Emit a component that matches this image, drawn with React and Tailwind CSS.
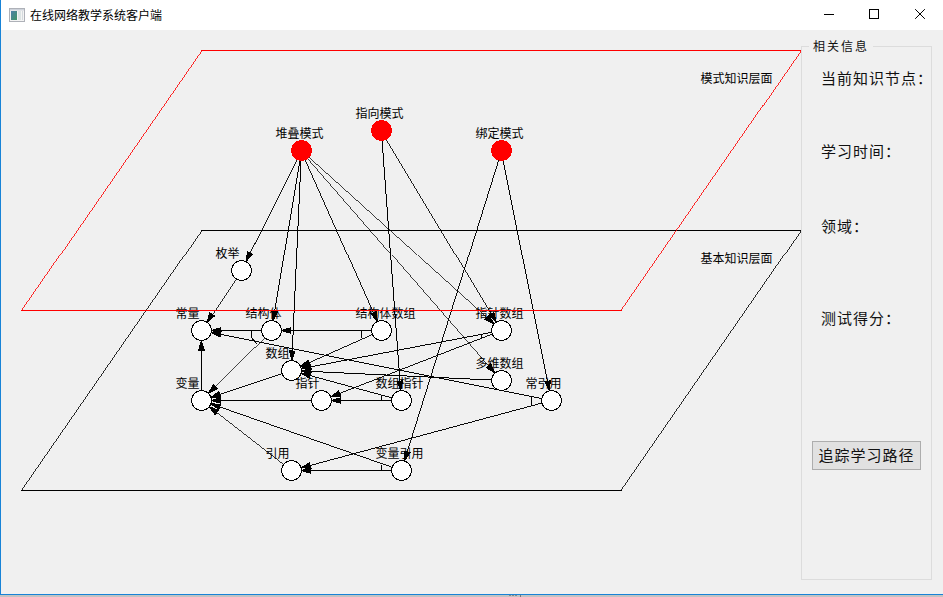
const NODES = {
  stack: { x: 301, y: 150, label: '堆叠模式', pattern: true },
  point: { x: 381, y: 130, label: '指向模式', pattern: true },
  bind: { x: 501, y: 150, label: '绑定模式', pattern: true },
  enumeration: { x: 241, y: 270, label: '枚举' },
  constant: { x: 201, y: 330, label: '常量' },
  struct: { x: 271, y: 330, label: '结构体' },
  structArray: { x: 381, y: 330, label: '结构体数组' },
  pointerArray: { x: 501, y: 330, label: '指针数组' },
  array: { x: 291, y: 370, label: '数组' },
  multiArray: { x: 501, y: 380, label: '多维数组' },
  variable: { x: 201, y: 400, label: '变量' },
  pointer: { x: 321, y: 400, label: '指针' },
  arrayPointer: { x: 401, y: 400, label: '数组指针' },
  constRef: { x: 551, y: 400, label: '常引用' },
  ref: { x: 291, y: 470, label: '引用' },
  varRef: { x: 401, y: 470, label: '变量引用' },
};

const EDGES = [
  ['stack', 'enumeration'],
  ['stack', 'struct'],
  ['stack', 'array'],
  ['stack', 'structArray'],
  ['stack', 'multiArray'],
  ['stack', 'pointerArray'],
  ['point', 'arrayPointer'],
  ['point', 'pointerArray'],
  ['bind', 'varRef'],
  ['bind', 'constRef'],
  ['enumeration', 'constant'],
  ['struct', 'constant'],
  ['struct', 'variable'],
  ['variable', 'constant'],
  ['structArray', 'struct'],
  ['structArray', 'array'],
  ['pointerArray', 'array'],
  ['pointerArray', 'pointer'],
  ['multiArray', 'array'],
  ['arrayPointer', 'pointer'],
  ['arrayPointer', 'array'],
  ['array', 'variable'],
  ['pointer', 'variable'],
  ['constRef', 'constant'],
  ['constRef', 'ref'],
  ['ref', 'variable'],
  ['varRef', 'ref'],
  ['varRef', 'variable'],
];

// Arcs joining two outgoing edges that belong to the same composition.
const ARCS = [
  'M251 330 V337 L257 344',
  'M361 330 V336 L362 338',
  'M481 333 V337',
  'M381 400 V395',
  'M381 470 V464',
  'M531 396 V405',
];

function Edge({ from, to }) {
  const a = NODES[from];
  const b = NODES[to];
  const len = Math.hypot(b.x - a.x, b.y - a.y);
  const ux = (b.x - a.x) / len;
  const uy = (b.y - a.y) / len;
  const tipX = b.x - ux * 10;
  const tipY = b.y - uy * 10;
  const baseX = tipX - ux * 9.5;
  const baseY = tipY - uy * 9.5;
  const points = [
    [tipX, tipY],
    [baseX - uy * 2.8, baseY + ux * 2.8],
    [baseX + uy * 2.8, baseY - ux * 2.8],
  ]
    .map((p) => p.join(','))
    .join(' ');
  // Steeper or flatter than 45°, the stroke covers exactly one pixel per step.
  const width = Math.max(Math.abs(ux), Math.abs(uy));
  return (
    <g>
      <line x1={a.x} y1={a.y} x2={b.x} y2={b.y} strokeWidth={width} />
      <polygon points={points} fill="black" />
    </g>
  );
}

function Layer({ top, color }) {
  const bottom = top + 260;
  return (
    <g stroke={color} fill="none" shapeRendering="crispEdges">
      <path d={`M201 ${top + 0.5} H801 M21 ${bottom + 0.5} H622`} />
      <path
        d={`M201.4 ${top + 0.5} L21.4 ${bottom + 0.5} M800.9 ${top + 0.5} L620.9 ${bottom + 0.5}`}
        strokeWidth="0.83"
      />
    </g>
  );
}

function Diagram() {
  const nodes = Object.values(NODES);
  return (
    <svg
      className="block h-[564px] w-[800px] shrink-0 font-['Noto_Sans_CJK_SC',sans-serif] text-[12px]"
      viewBox="1 30 800 564"
      overflow="visible"
    >
      <Layer top={230} color="black" />
      <g shapeRendering="crispEdges" fill="none" stroke="black" strokeWidth="1">
        <g transform="translate(0.4 0.5)">
          {EDGES.map(([from, to]) => (
            <Edge key={from + to} from={from} to={to} />
          ))}
          {ARCS.map((d) => (
            <path key={d} d={d} />
          ))}
        </g>
        <g transform="translate(0.5 0.5)">
          {nodes.map((n) => (
            <circle
              key={n.label}
              cx={n.x}
              cy={n.y}
              r="10"
              fill={n.pattern ? '#ff0000' : 'white'}
              stroke={n.pattern ? '#ff0000' : 'black'}
            />
          ))}
        </g>
      </g>
      <g fill="black">
        {nodes.map((n) => (
          <text key={n.label} x={n.x - 25.5} y={n.y - 12}>
            {n.label}
          </text>
        ))}
        <text x="700.5" y="83">模式知识层面</text>
        <text x="700.5" y="263">基本知识层面</text>
      </g>
      <Layer top={50} color="#ff0000" />
    </svg>
  );
}

function TitleBar() {
  return (
    <header className="flex h-[30px] shrink-0 items-center bg-white pl-2">
      <svg className="mr-[5px] h-[14px] w-4 shrink-0" viewBox="0 0 16 14">
        <defs>
          <linearGradient id="pane" x1="0" y1="0" x2="1" y2="1">
            <stop offset="0" stopColor="#4c7fa8" />
            <stop offset="1" stopColor="#3f9565" />
          </linearGradient>
        </defs>
        <rect x="0.5" y="0.5" width="15" height="13" fill="#f4f4f4" stroke="#aeb1b8" />
        <rect x="1" y="1" width="14" height="1.5" fill="#cdd2da" />
        <rect x="2" y="3" width="6" height="9" fill="url(#pane)" />
        <rect x="9" y="3" width="3" height="9" fill="#dce4e4" />
        <rect x="13" y="3" width="1" height="9" fill="#d4dadd" />
      </svg>
      <h1 className="grow text-[12px] leading-4">在线网络教学系统客户端</h1>
      <svg
        className="h-[30px] w-[138px] shrink-0"
        viewBox="0 0 138 30"
        fill="none"
        stroke="black"
      >
        <path d="M19 14.5 H29" shapeRendering="crispEdges" />
        <rect x="64.5" y="9.5" width="9" height="9" shapeRendering="crispEdges" />
        <path d="M110.5 9.5 L119.5 18.5 M119.5 9.5 L110.5 18.5" strokeLinecap="square" />
      </svg>
    </header>
  );
}

function InfoPanel() {
  return (
    <fieldset className="mt-[9px] h-[541px] w-[131px] min-w-0 shrink-0 border border-[#dcdcdc] pl-[10px] text-[#111]">
      <legend className="-ml-[3px] px-1 text-[12px] leading-[14px] tracking-[2px]">相关信息</legend>
      <div className="flex flex-col whitespace-nowrap pl-[9px] text-[15px] leading-5 tracking-[1px]">
        <p className="mt-[15px]">当前知识节点：</p>
        <p className="mt-[53px]">学习时间：</p>
        <p className="mt-[55px]">领域：</p>
        <p className="mt-[72px]">测试得分：</p>
      </div>
      <button className="mt-[113px] flex h-[29px] w-[109px] items-center justify-center whitespace-nowrap border border-[#adadad] bg-[#e1e1e1] text-[15px] tracking-[1px]">
        追踪学习路径
      </button>
    </fieldset>
  );
}

export default function App() {
  return (
    <div className="flex h-[597px] w-[943px] flex-col overflow-hidden bg-[#c3c3c3] font-['Noto_Sans_CJK_SC',sans-serif] text-black">
      <div className="flex h-[595px] shrink-0 flex-col border-b border-l border-[#1883d7] bg-[#f0f0f0]">
        <TitleBar />
        <main className="flex grow">
          <Diagram />
          <InfoPanel />
        </main>
      </div>
      <div className="flex h-[2px] shrink-0 items-start gap-px">
        <span className="ml-[509px] h-px w-[2px] bg-[#888]" />
        <span className="h-px w-[2px] bg-[#888]" />
        <span className="h-px w-[2px] bg-[#888]" />
        <span className="ml-[2px] h-[2px] w-px bg-[#777]" />
      </div>
    </div>
  );
}
